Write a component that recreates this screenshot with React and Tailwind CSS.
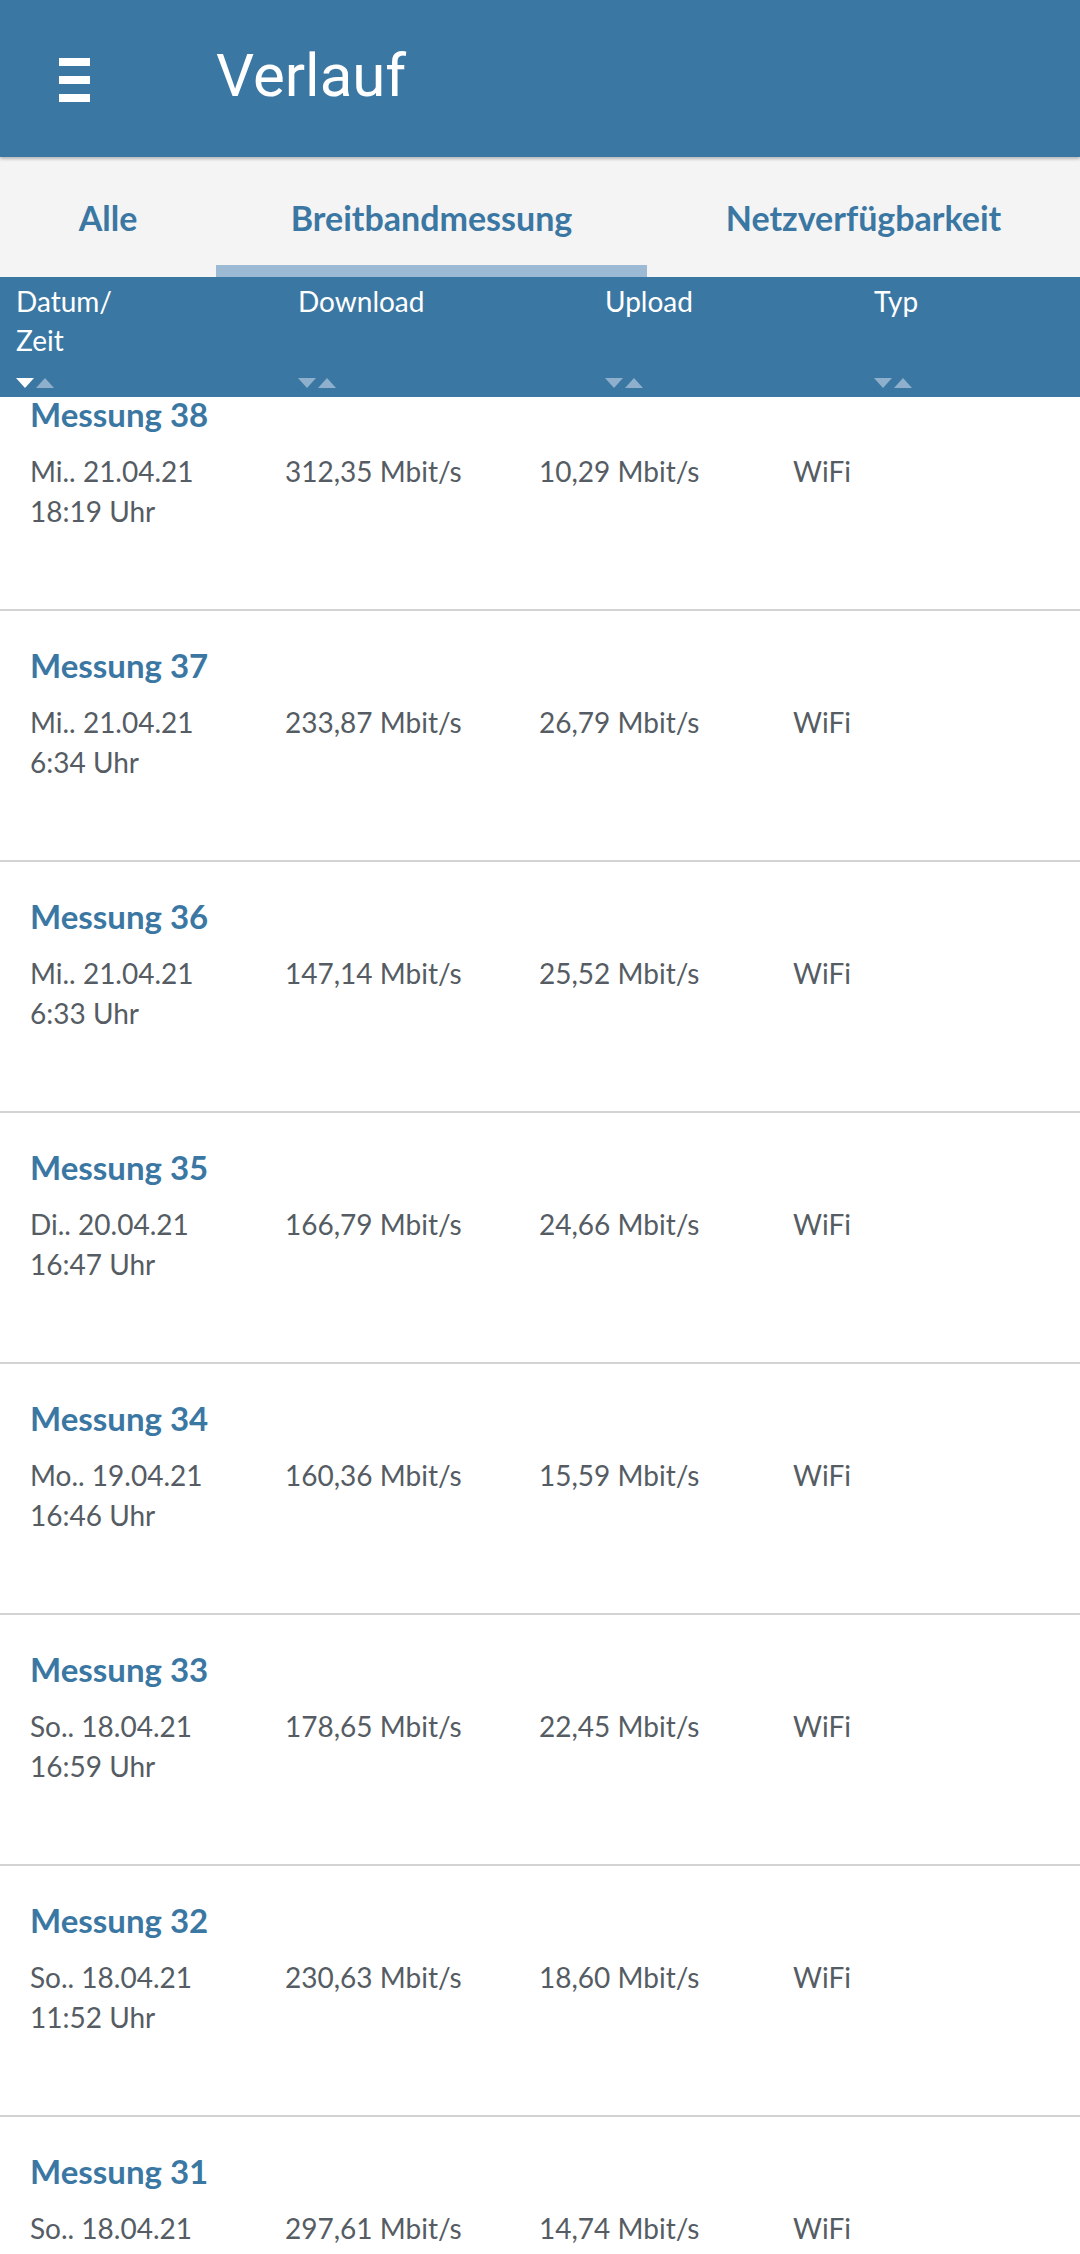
import React from 'react';

const rows = [
  { n: 38, day: 'Mi.. 21.04.21', time: '18:19 Uhr', down: '312,35 Mbit/s', up: '10,29 Mbit/s', type: 'WiFi' },
  { n: 37, day: 'Mi.. 21.04.21', time: '6:34 Uhr', down: '233,87 Mbit/s', up: '26,79 Mbit/s', type: 'WiFi' },
  { n: 36, day: 'Mi.. 21.04.21', time: '6:33 Uhr', down: '147,14 Mbit/s', up: '25,52 Mbit/s', type: 'WiFi' },
  { n: 35, day: 'Di.. 20.04.21', time: '16:47 Uhr', down: '166,79 Mbit/s', up: '24,66 Mbit/s', type: 'WiFi' },
  { n: 34, day: 'Mo.. 19.04.21', time: '16:46 Uhr', down: '160,36 Mbit/s', up: '15,59 Mbit/s', type: 'WiFi' },
  { n: 33, day: 'So.. 18.04.21', time: '16:59 Uhr', down: '178,65 Mbit/s', up: '22,45 Mbit/s', type: 'WiFi' },
  { n: 32, day: 'So.. 18.04.21', time: '11:52 Uhr', down: '230,63 Mbit/s', up: '18,60 Mbit/s', type: 'WiFi' },
  { n: 31, day: 'So.. 18.04.21', time: '16:41 Uhr', down: '297,61 Mbit/s', up: '14,74 Mbit/s', type: 'WiFi' },
];

function SortArrows({ active }) {
  return (
    <div className="flex items-center gap-[2px]">
      <svg width="18" height="10" viewBox="0 0 18 10">
        <polygon points="0,0 18,0 9,10" fill={active ? '#ffffff' : '#8fb0cd'} />
      </svg>
      <svg width="18" height="10" viewBox="0 0 18 10">
        <polygon points="0,10 18,10 9,0" fill="#8fb0cd" />
      </svg>
    </div>
  );
}

function ColHead({ children, active }) {
  return (
    <div className="flex flex-col justify-between h-full pt-[5px] pb-[9px]">
      <div className="text-[28px] leading-[39px] text-white">{children}</div>
      <SortArrows active={active} />
    </div>
  );
}

export default function App() {
  return (
    <div className="w-[1080px] h-[2254px] overflow-hidden bg-white font-['Lato',sans-serif]">
      {/* top bar */}
      <div className="h-[157px] bg-[#3b77a3] flex items-center shadow-[0_2px_3px_rgba(0,0,0,0.25)] relative z-10">
        <div className="ml-[59px] w-[31px] flex flex-col gap-[10px] mt-[2px]">
          <div className="h-[8px] bg-white" />
          <div className="h-[8px] bg-white" />
          <div className="h-[8px] bg-white" />
        </div>
        <div className="ml-[126px] text-white text-[60px] font-['Roboto',sans-serif] leading-none -mt-[6px]">
          Verlauf
        </div>
      </div>

      {/* tabs */}
      <div className="h-[120px] bg-[#f4f4f4] flex text-[#3b77a3] font-bold text-[34px]">
        <div className="w-[216px] flex items-center justify-center">Alle</div>
        <div className="w-[431px] flex flex-col">
          <div className="flex-1 flex items-center justify-center pt-[12px]">Breitbandmessung</div>
          <div className="h-[12px] bg-[#9dbad4]" />
        </div>
        <div className="flex-1 flex items-center justify-center">Netzverfügbarkeit</div>
      </div>

      {/* column header */}
      <div className="h-[120px] bg-[#3b77a3] grid grid-cols-[282px_307px_269px_1fr] pl-[16px] relative z-10">
        <ColHead active>
          Datum/
          <br />
          Zeit
        </ColHead>
        <ColHead>Download</ColHead>
        <ColHead>Upload</ColHead>
        <ColHead>Typ</ColHead>
      </div>

      {/* list */}
      <div className="overflow-hidden">
        <div className="-mt-[37px]">
          {rows.map((r) => (
            <div key={r.n} className="h-[251px] border-b-2 border-[#d3d3d3] pl-[30px] pt-[34px]">
              <div className="text-[33px] leading-[40px] font-bold text-[#3b77a3]">Messung {r.n}</div>
              <div className="mt-[17px] grid grid-cols-[255px_254px_254px_1fr] text-[28px] leading-[40px] text-[#555c63]">
                <div>
                  {r.day}
                  <br />
                  {r.time}
                </div>
                <div>{r.down}</div>
                <div>{r.up}</div>
                <div>{r.type}</div>
              </div>
            </div>
          ))}
        </div>
      </div>
    </div>
  );
}
